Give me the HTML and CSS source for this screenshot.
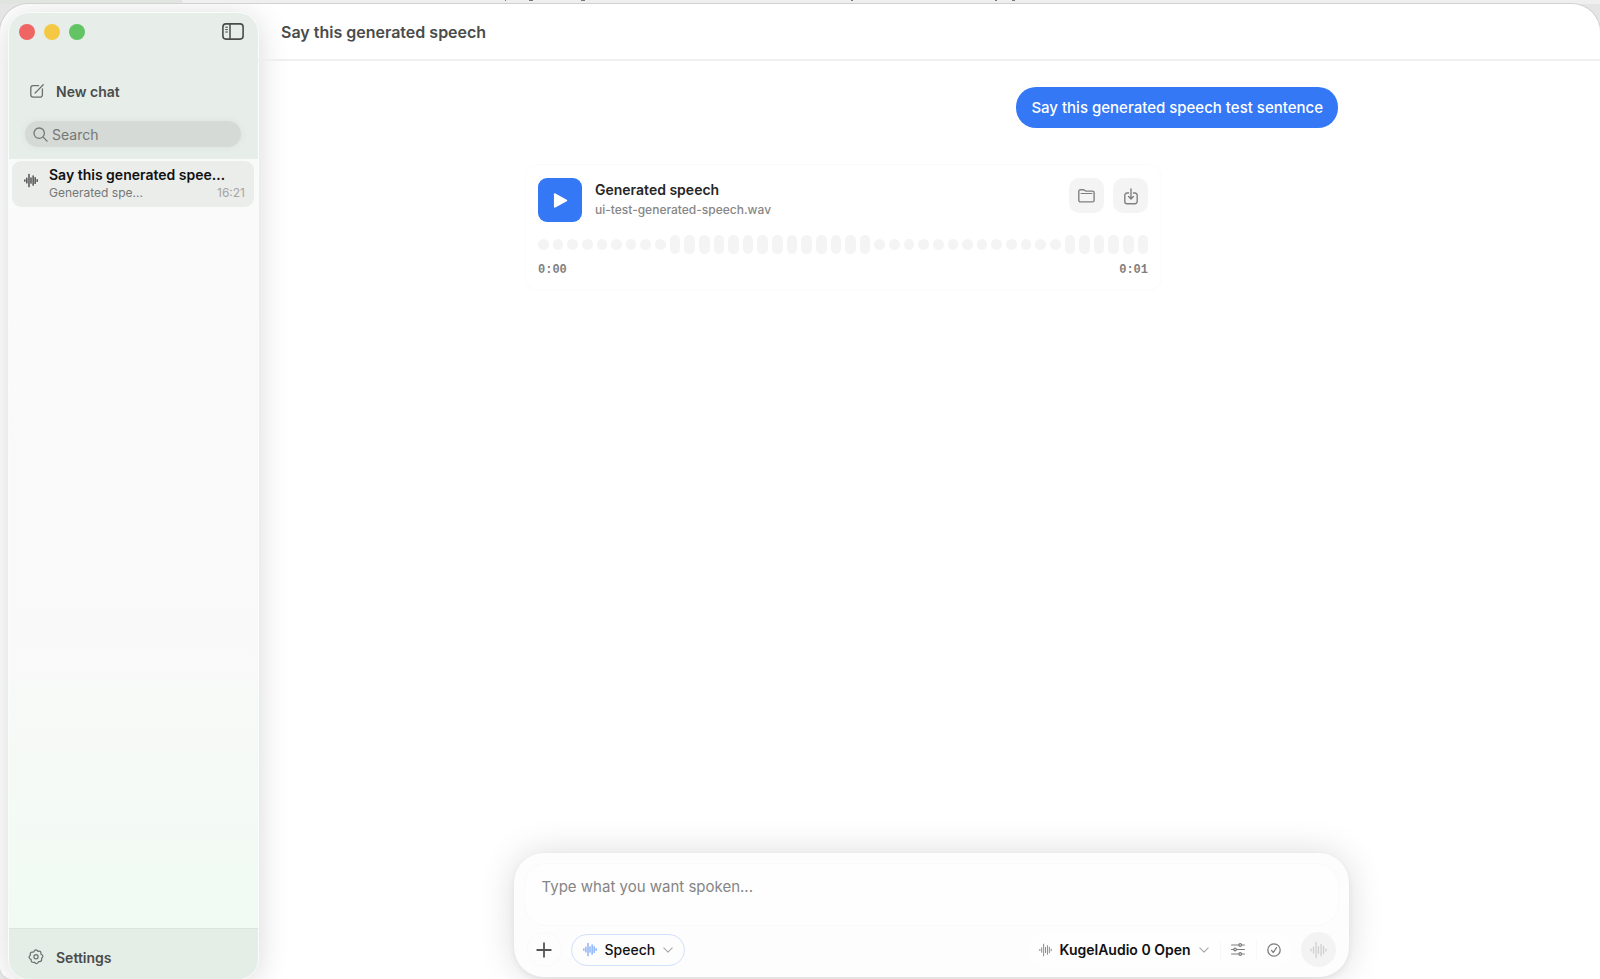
FILE: index.html
```html
<!DOCTYPE html>
<html lang="en">
<head>
<meta charset="utf-8">
<title>Say this generated speech</title>
<link rel="stylesheet" href="styles.css">
</head>
<body>
<svg class="defs" aria-hidden="true">
  <symbol id="wave" viewBox="0 0 16 16">
    <path d="M1 7.200v1.600M3.300 5.200v5.600M5.700 .8v14.400M8 4.800v6.400M10.400 2.600v10.800M12.700 4.600v6.800M15 7v2" fill="none" stroke="currentColor" stroke-width="1.200" stroke-linecap="round"/>
  </symbol>
  <symbol id="chevron" viewBox="0 0 10 6">
    <path d="M.8 .8 5 5.1 9.2 .8" fill="none" stroke="currentColor" stroke-width="1.1" stroke-linecap="round" stroke-linejoin="round"/>
  </symbol>
</svg>
<div class="backdrop" aria-hidden="true">
  <svg width="1100" height="2" fill="#777"><path d="M505 0h1v1h-1zM529 0h4v1h-4zM581 0h4v1h-4zM851 0h2v1h-2zM995 0h2v1h-2zM1012 0h3v1h-3z"/></svg>
</div>
<div class="window">
  <aside class="sidebar">
    <div class="sidebar-top">
      <div class="titlebar">
        <div class="lights">
          <button class="light light-close" aria-label="Close"></button>
          <button class="light light-min" aria-label="Minimize"></button>
          <button class="light light-zoom" aria-label="Zoom"></button>
        </div>
        <button class="toggle" aria-label="Toggle sidebar">
          <svg width="22" height="17" viewBox="0 0 22 17" fill="none" stroke="currentColor" stroke-linecap="round"><rect x=".9" y=".9" width="20.2" height="15.2" rx="3" stroke-width="1.6"/><path d="M8 1v15" stroke-width="1.5"/><path d="M3.6 4.2h1.9M3.6 6.6h1.9M3.6 9h1.9" stroke-width="1"/></svg>
        </button>
      </div>
      <button class="nav-row">
        <svg width="14" height="14" viewBox="0 0 14 14" fill="none" stroke="currentColor" stroke-width="1.3" stroke-linecap="round" stroke-linejoin="round"><path d="M8.6 1.6H3.2A2.4 2.4 0 0 0 .8 4v6.8a2.4 2.4 0 0 0 2.4 2.4H10a2.4 2.4 0 0 0 2.4-2.4V5"/><path d="M5.6 8.6 13.2 .7M5.1 9.1l.5-.6"/></svg>
        <span>New chat</span>
      </button>
      <label class="search">
        <svg width="15" height="15" viewBox="0 0 15 15" fill="none" stroke="currentColor" stroke-width="1.3" stroke-linecap="round"><circle cx="6.2" cy="6.2" r="5.2"/><path d="m10.1 10.1 4 4"/></svg>
        <input type="search" placeholder="Search" aria-label="Search chats">
      </label>
    </div>
    <nav class="chats">
      <a class="chat" href="#">
        <svg class="chat-icon" width="14" height="15"><use href="#wave"/></svg>
        <span class="chat-title">Say this generated speech</span>
        <span class="chat-sub"><span>Generated spe...</span><time>16:21</time></span>
      </a>
    </nav>
    <div class="sidebar-foot">
      <button class="nav-row">
        <svg width="16" height="16" viewBox="0 0 16 16" fill="none" stroke="currentColor" stroke-width="1.2" stroke-linejoin="round"><path d="M6.600 1.700Q8-.1 9.400 1.700L9.800 2.400 10.700 2.200Q12.900 2 12.900 4.100L12.900 5 13.700 5.500Q15.600 7 14.300 8.600L13.500 9.300 13.700 10.200Q13.700 12.500 11.600 12.600L10.700 12.500 10.200 13.300Q8.800 15.200 7.200 14.100L6.500 13.200 5.600 13.500Q3.300 13.600 3.100 11.500L3.200 10.600 2.300 10.100Q.5 8.700 1.500 7.100L2.400 6.400 2.200 5.500Q2.100 3.200 4.300 3L5.300 3.100 5.800 2.700z"/><circle cx="8" cy="7.800" r="2.100"/></svg>
        <span>Settings</span>
      </button>
    </div>
  </aside>
  <main class="main">
    <header class="header"><h1>Say this generated speech</h1></header>
    <section class="thread">
      <p class="bubble">Say this generated speech test sentence</p>
      <article class="card">
        <div class="card-head">
          <button class="play" aria-label="Play"><svg width="15" height="17" viewBox="0 0 16 18"><path d="M1 2.400v13.200c0 .9.8 1.300 1.600.9l12-6.700c.7-.4.7-1.200 0-1.600l-12-6.700C1.800 1.100 1 1.500 1 2.400z" fill="currentColor"/></svg></button>
          <div class="card-text"><h2>Generated speech</h2><p>ui-test-generated-speech.wav</p></div>
          <button class="tool" aria-label="Show in folder"><svg width="17" height="14" viewBox="0 0 17 14" fill="none" stroke="currentColor" stroke-width="1.4" stroke-linejoin="round"><path d="M.8 11.200V2.500A1.700 1.700 0 0 1 2.500.8h2.700c.8 0 1 .3 1.500.7.500.5.9.6 1.500.6h6.200a1.700 1.700 0 0 1 1.700 1.700v7.400a1.700 1.700 0 0 1-1.700 1.700H2.500a1.700 1.700 0 0 1-1.700-1.700z"/><path d="M3 4.500h11" stroke-linecap="round" stroke-width="1"/></svg></button>
          <button class="tool" aria-label="Download"><svg class="tool-down" width="14" height="17" viewBox="0 0 14 17" fill="none" stroke="currentColor" stroke-width="1.4" stroke-linecap="round" stroke-linejoin="round"><path d="M4.600 5H3A2.200 2.200 0 0 0 .8 7.200v6.300A2.200 2.200 0 0 0 3 15.700h8a2.200 2.200 0 0 0 2.200-2.200V7.200A2.200 2.200 0 0 0 11 5H9.400M7 1v9.800M4.600 8.600 7 11l2.400-2.400"/></svg></button>
        </div>
        <div class="bars" aria-hidden="true"><i></i><i></i><i></i><i></i><i></i><i></i><i></i><i></i><i></i><i class="tall"></i><i class="tall"></i><i class="tall"></i><i class="tall"></i><i class="tall"></i><i class="tall"></i><i class="tall"></i><i class="tall"></i><i class="tall"></i><i class="tall"></i><i class="tall"></i><i class="tall"></i><i class="tall"></i><i class="tall"></i><i></i><i></i><i></i><i></i><i></i><i></i><i></i><i></i><i></i><i></i><i></i><i></i><i></i><i class="tall"></i><i class="tall"></i><i class="tall"></i><i class="tall"></i><i class="tall"></i><i class="tall"></i></div>
        <div class="times"><time>0:00</time><time>0:01</time></div>
      </article>
    </section>
    <form class="composer">
      <textarea placeholder="Type what you want spoken..." aria-label="Message"></textarea>
      <div class="controls">
        <button type="button" class="plus" aria-label="Add"><svg width="16" height="16" viewBox="0 0 16 16" stroke="currentColor" stroke-width="1.8" stroke-linecap="round"><path d="M8 1.200v13.600M1.200 8h13.600"/></svg></button>
        <button type="button" class="mode"><svg class="mode-wave" width="14" height="15"><use href="#wave"/></svg><span>Speech</span><svg class="chev" width="10" height="6"><use href="#chevron"/></svg></button>
        <div class="model-group">
          <button type="button" class="model"><svg class="model-wave" width="13" height="14"><use href="#wave"/></svg><span>KugelAudio 0 Open</span><svg class="chev" width="10" height="6"><use href="#chevron"/></svg></button>
          <button type="button" class="opt" aria-label="Options"><svg width="14" height="13" viewBox="0 0 14 13" fill="none" stroke="currentColor" stroke-width="1.200" stroke-linecap="round"><path d="M.6 2h7.200M10.600 2h2.800M.6 6.500h2.100M5.500 6.500h7.900M.6 11h7.200M10.600 11h2.800"/><circle cx="9.200" cy="2" r="1.300"/><circle cx="4.100" cy="6.500" r="1.300"/><circle cx="9.200" cy="11" r="1.300"/></svg></button>
          <button type="button" class="opt" aria-label="Status"><svg width="14" height="14" viewBox="0 0 14 14" fill="none" stroke="currentColor" stroke-width="1.300" stroke-linecap="round" stroke-linejoin="round"><circle cx="7" cy="7" r="6.200"/><path d="m4.500 7.400 1.800 2.100L9.500 4.600"/></svg></button>
        </div>
        <button class="send" aria-label="Generate speech"><svg width="17" height="18"><use href="#wave"/></svg></button>
      </div>
    </form>
  </main>
</div>
</body>
</html>
```

FILE: styles.css
```css
* { box-sizing: border-box; }
html, body { height: 100%; }
body {
  display: flex;
  flex-direction: column;
  margin: 0;
  overflow: hidden;
  background: #e4e5e4;
  color: #4a4c4b;
  font-family: Inter, "Liberation Sans", sans-serif;
  font-size: 15px;
}
h1, h2, p { margin: 0; }
button, input, textarea { font: inherit; color: inherit; border: 0; background: none; padding: 0; outline: 0; }
button { display: flex; align-items: center; justify-content: center; }
svg { display: block; flex: none; }
.defs { position: absolute; width: 0; height: 0; }

.backdrop { flex: none; height: 4px; background: linear-gradient(90deg, #e2e4e2 182px, #efefef 182px); }
.window {
  display: flex;
  flex: 1;
  min-height: 0;
  background: #fff;
  border-radius: 28px 28px 0 12px;
  box-shadow: 0 0 0 1px #d2d2d2;
  overflow: hidden;
}
.sidebar {
  display: flex;
  flex-direction: column;
  flex: none;
  width: 249px;
  margin: 9px 0 0 9px;
  border-radius: 20px;
  overflow: hidden;
  background: linear-gradient(#f6fbf8, #fafafa 24%, #f9f9f9 65%, #effbf1 100%);
  box-shadow: 0 0 0 1px #f8fcfa, 0 4px 32px rgba(0, 0, 0, 0.16);
}
.sidebar-top { padding-bottom: 12px; background: #e7eeea; }
.titlebar { display: flex; justify-content: space-between; align-items: center; height: 37px; padding: 0 14px 0 10px; }
.lights { display: flex; gap: 9px; }
.light { width: 16px; height: 16px; border-radius: 50%; }
.light-close { background: #ee6563; }
.light-min { background: #f4c842; }
.light-zoom { background: #63c466; }
.nav-row { gap: 12px; padding: 0 21px; height: 36px; font-weight: 600; font-size: 14px; }
.nav-row svg { color: #6b6f6d; }
.titlebar + .nav-row { margin-top: 23px; }
.search {
  display: flex;
  align-items: center;
  gap: 4px;
  height: 26px;
  margin: 12px 17px 0 16px;
  padding: 0 8px;
  border-radius: 13px;
  background: #d5dad7;
  box-shadow: 0 0 8px rgba(0, 0, 0, 0.05);
  color: #737775;
}
.search input { width: 100%; min-width: 0; font-size: 14px; }
.search input::placeholder { color: #737775; opacity: 1; }
.chats { flex: 1; padding: 2px 4px 2px 3px; }
.chat {
  display: grid;
  grid-template-columns: 14px 1fr;
  column-gap: 11px;
  align-content: center;
  height: 46px;
  padding: 0 9px 0 12px;
  border-radius: 9px;
  background: #ebedeb;
  color: #111;
  text-decoration: none;
}
.chat-icon { grid-row: 1 / 3; margin-top: 7px; }
.chat-title { overflow: hidden; padding-right: 18px; text-overflow: ellipsis; white-space: nowrap; font-size: 14px; font-weight: 600; line-height: 18px; }
.chat-sub { display: flex; justify-content: space-between; font-size: 12px; line-height: 18px; color: #757776; }
.chat-sub time { color: #a3a5a4; }
.sidebar-foot { height: 51px; padding-top: 10px; border-top: 1px solid #dce4de; background: #e5ede7; }
.sidebar-foot .nav-row { padding-left: 19px; }

.main { display: flex; flex-direction: column; flex: 1; min-width: 0; }
.header { display: flex; align-items: center; height: 57px; padding: 0 23px; border-bottom: 2px solid #efefef; }
.header h1 { font-size: 16px; font-weight: 600; }
.thread, .composer { align-self: center; margin-left: 4px; }
.thread { display: flex; flex-direction: column; flex: 1; width: 814px; padding-top: 26px; }
.bubble {
  align-self: flex-end;
  padding: 10px 15px;
  border-radius: 20px;
  background: #3478f6;
  color: #fff;
  font-size: 15px;
  font-weight: 500;
  line-height: 21px;
}
.card {
  width: 638px;
  margin-top: 36px;
  padding: 13px;
  border: 1px solid #fbfbfb;
  border-radius: 14px;
}
.card-head { display: flex; align-items: flex-start; gap: 9px; }
.play { width: 44px; height: 44px; border-radius: 9px; background: #3478f6; color: #fff; }
.card-text { flex: 1; padding: 2px 4px; }
.card-text h2 { color: #262626; font-size: 14px; font-weight: 600; line-height: 19px; }
.card-text p { color: #868686; font-size: 12px; font-weight: 500; line-height: 21px; }
.tool { width: 35px; height: 35px; border-radius: 10px; background: #f4f4f4; color: #808080; }
.tool-down { margin-top: 2px; }
.bars { display: flex; align-items: center; gap: 4px; height: 20px; margin-top: 12px; }
.bars i { flex: 1; height: 11px; border-radius: 6px; background: #f4f4f4; }
.bars .tall { height: 19px; }
.times { display: flex; justify-content: space-between; margin-top: 9px; color: #808080; font: 700 12px/14px "Liberation Mono", monospace; }

.composer {
  width: 835px;
  margin-bottom: 2px;
  padding: 10px;
  border-radius: 30px;
  background: #fdfdfd;
  box-shadow: 0 0 36px rgba(0, 0, 0, 0.14), 0 3px 6px rgba(0, 0, 0, 0.06);
}
.composer textarea {
  display: block;
  width: 100%;
  height: 63px;
  padding: 13px 17px;
  border: 1px solid #fafafa;
  border-radius: 22px;
  background: #fefefe;
  font-size: 15px;
  line-height: 20px;
  resize: none;
}
.composer textarea::placeholder { color: #858585; opacity: 1; }
.controls { display: flex; align-items: center; height: 35px; margin-top: 6px; padding: 0 3px; }
.plus { width: 35px; height: 35px; border: 1px solid #fafafa; border-radius: 50%; color: #555; }
.mode { height: 32px; margin-left: 9px; padding: 0 11px; gap: 8px; border: 1px solid #d3e0fb; border-radius: 16px; color: #111; font-size: 14px; font-weight: 500; }
.mode-wave { color: #5f95f8; }
.chev { color: #a8a8a8; }
.model-group { display: flex; align-items: center; height: 35px; margin: 0 9px 0 auto; border-radius: 18px; background: #fefefe; }
.model { gap: 8px; padding: 0 11px; color: #111; font-size: 14px; font-weight: 600; }
.model-wave { color: #888; }
.opt { width: 36px; height: 20px; border-left: 1px solid #f8f8f8; color: #7d7d7d; }
.send { width: 35px; height: 35px; border-radius: 50%; background: #f3f3f3; color: #cfcfcf; }
```
